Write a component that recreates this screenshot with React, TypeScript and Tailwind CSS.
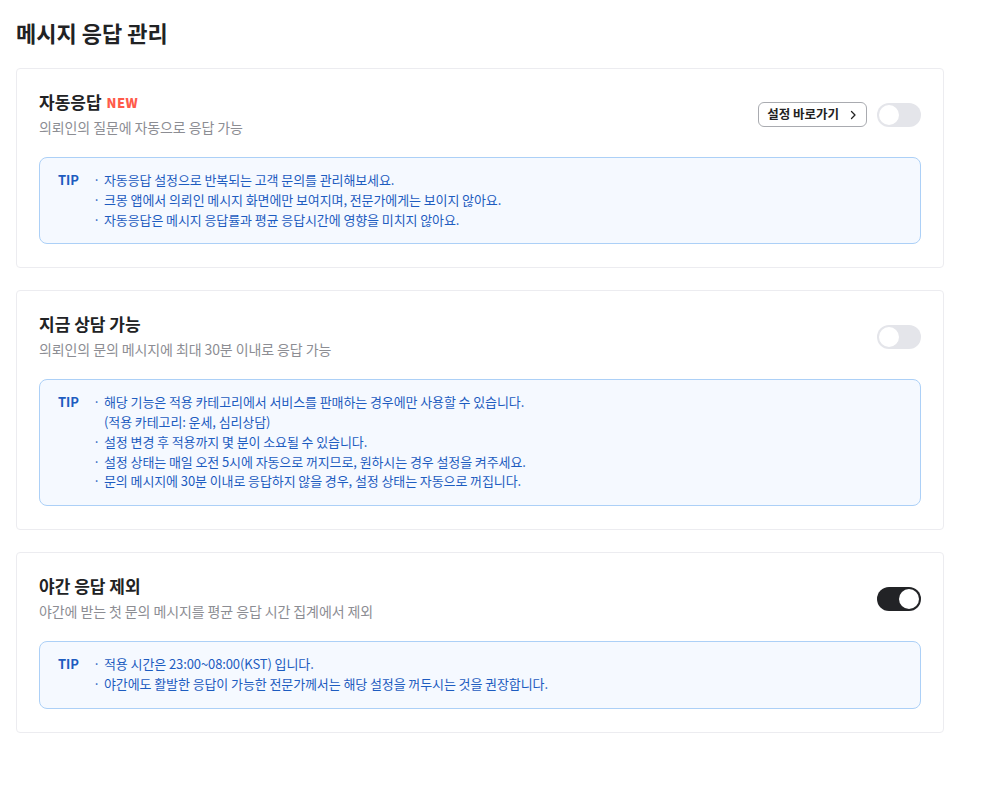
import React, { useState } from 'react';

type Section = {
  id: string;
  title: string;
  desc: string;
  isNew?: boolean;
  shortcut?: boolean;
  on: boolean;
  tips: { text: string; sub?: string }[];
};

const SECTIONS: Section[] = [
  {
    id: 'auto',
    title: '자동응답',
    desc: '의뢰인의 질문에 자동으로 응답 가능',
    isNew: true,
    shortcut: true,
    on: false,
    tips: [
      { text: '자동응답 설정으로 반복되는 고객 문의를 관리해보세요.' },
      { text: '크몽 앱에서 의뢰인 메시지 화면에만 보여지며, 전문가에게는 보이지 않아요.' },
      { text: '자동응답은 메시지 응답률과 평균 응답시간에 영향을 미치지 않아요.' },
    ],
  },
  {
    id: 'now',
    title: '지금 상담 가능',
    desc: '의뢰인의 문의 메시지에 최대 30분 이내로 응답 가능',
    on: false,
    tips: [
      {
        text: '해당 기능은 적용 카테고리에서 서비스를 판매하는 경우에만 사용할 수 있습니다.',
        sub: '(적용 카테고리: 운세, 심리상담)',
      },
      { text: '설정 변경 후 적용까지 몇 분이 소요될 수 있습니다.' },
      { text: '설정 상태는 매일 오전 5시에 자동으로 꺼지므로, 원하시는 경우 설정을 켜주세요.' },
      { text: '문의 메시지에 30분 이내로 응답하지 않을 경우, 설정 상태는 자동으로 꺼집니다.' },
    ],
  },
  {
    id: 'night',
    title: '야간 응답 제외',
    desc: '야간에 받는 첫 문의 메시지를 평균 응답 시간 집계에서 제외',
    on: true,
    tips: [
      { text: '적용 시간은 23:00~08:00(KST) 입니다.' },
      { text: '야간에도 활발한 응답이 가능한 전문가께서는 해당 설정을 꺼두시는 것을 권장합니다.' },
    ],
  },
];

function Toggle({ initial }: { initial: boolean }) {
  const [on, setOn] = useState(initial);
  return (
    <button
      type="button"
      onClick={() => setOn(!on)}
      className={`relative h-[24px] w-[44px] shrink-0 rounded-full transition-colors ${
        on ? 'bg-[#222326]' : 'bg-[#e4e5ea]'
      }`}
    >
      <span
        className={`absolute top-[2px] h-[20px] w-[20px] rounded-full bg-white ${
          on ? 'left-[22px]' : 'left-[2px]'
        }`}
      />
    </button>
  );
}

function Card({ s }: { s: Section }) {
  return (
    <div className="rounded-[4px] border border-[#ececf0] bg-white px-[22px] pt-[21px] pb-[23px]">
      <div className="flex items-center justify-between">
        <div>
          <div className="flex items-center gap-[5px]">
            <h2 className="text-[17px] font-bold leading-[24px] text-[#212224]">{s.title}</h2>
            {s.isNew && (
              <span className="text-[13px] font-extrabold leading-none tracking-[0.4px] text-[#ff5a4a]">
                NEW
              </span>
            )}
          </div>
          <p className="mt-[3px] text-[14px] leading-[20px] tracking-[-0.1px] text-[#8c8d93]">{s.desc}</p>
        </div>
        <div className="mt-[2px] flex items-center gap-[10px]">
          {s.shortcut && (
            <button
              type="button"
              className="flex h-[25px] items-center gap-[9px] rounded-[6px] border border-[#a9abb0] bg-white pl-[8px] pr-[8px] text-[12.5px] font-semibold text-[#222]"
            >
              설정 바로가기
              <svg width="10" height="10" viewBox="0 0 10 10" fill="none">
                <path d="M3.5 1.5L7 5L3.5 8.5" stroke="#222" strokeWidth="1.3" strokeLinecap="round" strokeLinejoin="round" />
              </svg>
            </button>
          )}
          <Toggle initial={s.on} />
        </div>
      </div>
      <div className="mt-[20px] flex rounded-[8px] border border-[#acd0f7] bg-[#f5f9ff] pl-[18px] pr-[18px] pt-[12px] pb-[14px] text-[13px] leading-[19.75px] tracking-[-0.1px] text-[#1d5cc0]">
        <span className="w-[35px] shrink-0 font-bold">TIP</span>
        <ul>
          {s.tips.map((t, i) => (
            <li key={i} className="flex">
              <span className="w-[11px] shrink-0">·</span>
              <span>
                {t.text}
                {t.sub && <span className="block">{t.sub}</span>}
              </span>
            </li>
          ))}
        </ul>
      </div>
    </div>
  );
}

export default function App() {
  return (
    <div
      className="min-h-screen w-[983px] bg-white pl-[16px] pt-[18px]"
      style={{ fontFamily: '"Noto Sans CJK KR", "Noto Sans", sans-serif' }}
    >
      <h1 className="text-[22px] font-bold leading-[28px] text-[#212224]">메시지 응답 관리</h1>
      <div className="mt-[22px] flex w-[928px] flex-col gap-[22px]">
        {SECTIONS.map((s) => (
          <Card key={s.id} s={s} />
        ))}
      </div>
    </div>
  );
}
